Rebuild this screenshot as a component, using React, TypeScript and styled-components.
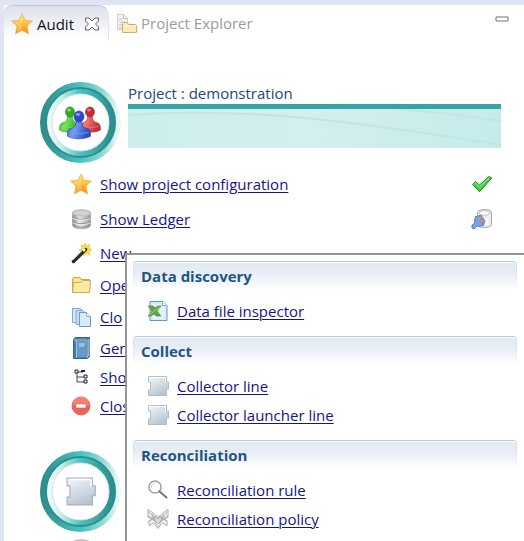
import React from "react";
import styled, { createGlobalStyle } from "styled-components";

const GlobalStyle = createGlobalStyle`
  * { box-sizing: border-box; }
  body { margin: 0; background: #fff; font-family: "Open Sans", "Noto Sans", sans-serif; font-size: 15px; line-height: 20px; }
  svg { display: block; flex: none; }
  button { font: inherit; border: 0; padding: 0; background: none; cursor: pointer; }
  ul { list-style: none; margin: 0; padding: 0; }
`;

const Page = styled.div`
  position: relative;
  height: 100vh;
  overflow: hidden;
  background: #fff;
  border-top: 5px solid #dfe5f5;
  border-left: 4px solid #dfe5f5;
`;
const TabBar = styled.header`
  display: flex;
  align-items: center;
  height: 36px;
  padding-right: 13px;
`;
const Tab = styled.div<{ $active?: boolean }>`
  display: flex;
  align-items: center;
  gap: 9px;
  height: 36px;
  padding: 0 7px;
  border-radius: 8px 10px 0 0;
  ${(p) =>
    p.$active &&
    "background: linear-gradient(#dde0ec, #fff 32px); border-top: 1px solid #c3c9dc; border-right: 1px solid #e2e5ee;"}
`;
const TabLabel = styled.button<{ $active?: boolean }>`
  display: flex;
  align-items: center;
  gap: 4px;
  font-size: 15px;
  color: ${(p) => (p.$active ? "#101020" : "#9b9b9b")};
`;
const IconButton = styled.button`
  display: grid;
  place-items: center;
  width: 18px;
  height: 18px;
`;
const Spacer = styled.div`
  flex: 1;
`;
const MinimizeButton = styled(IconButton)`
  align-self: flex-start;
  margin-top: 5px;
`;
const Main = styled.main`
  padding: 41px 23px 0 36px;
`;
const GroupHeader = styled.section`
  display: flex;
  gap: 7px;
`;
const Intro = styled.div`
  flex: 1;
  min-width: 0;
`;
const Title = styled.h1`
  margin: 0;
  font-size: 15px;
  font-weight: 400;
  line-height: 22px;
  color: #26467c;
`;
const Banner = styled.div`
  height: 44px;
  border-top: 5px solid #36a3a4;
  background: linear-gradient(100deg, #cdeeed, #d3efee 50%, #c5ebea);
`;
const Actions = styled.ul`
  padding: 3px 8px 31px 30px;
`;
const Action = styled.li<{ $height: number }>`
  display: flex;
  align-items: center;
  gap: 8px;
  height: ${(p) => p.$height}px;
`;
const IconCell = styled.span`
  display: grid;
  place-items: center;
  width: 22px;
  height: 22px;
  flex: none;
`;
const Link = styled.a`
  color: #14148c;
  font-size: 15px;
  white-space: nowrap;
  text-decoration: underline;
  text-decoration-thickness: 1px;
  text-underline-offset: 2px;
`;
const Menu = styled.nav`
  position: absolute;
  top: 248px;
  left: 121px;
  right: 0;
  bottom: 0;
  padding: 6px 7px 0 6px;
  background: #fff;
  border-top: 2px solid #969696;
  border-left: 2px solid #969696;
`;
const MenuSection = styled.section`
  margin-bottom: 11px;
`;
const MenuTitle = styled.h2`
  height: 29px;
  margin: 0 0 6px;
  padding: 4px 8px;
  font-size: 15px;
  line-height: 20px;
  color: #205586;
  border-top: 1px solid #b4cbdf;
  border-radius: 4px;
  background:
    linear-gradient(#c3d6e6, #fff) left / 1px 100% no-repeat,
    linear-gradient(#c3d6e6, #fff) right / 1px 100% no-repeat,
    linear-gradient(#e0eaf2, #e9edf5 40%, #fff);
  box-shadow: inset 0 1px #fff;
`;
const MenuItem = styled.li`
  display: flex;
  align-items: center;
  gap: 8px;
  height: 29px;
  padding-left: 14px;
`;

const Star = () => (
  <svg width="22" height="22" viewBox="0 0 22 22">
    <defs>
      <linearGradient id="star" x2="0" y2="1">
        <stop stopColor="#ffe486" />
        <stop offset=".5" stopColor="#ffbd3b" />
        <stop offset="1" stopColor="#f7861d" />
      </linearGradient>
    </defs>
    <path d="M11 .8 14.200 7.200 21.500 8 16 13 17.500 20.800 11 17.300 4.500 20.800 6 13 .5 8 7.800 7.200Z" fill="url(#star)" stroke="#f0ae50" strokeWidth=".7" strokeLinejoin="round" />
    <path d="M11 3v13l-5 3 1.200-6-4-4 5.500-.6Z" fill="#fff4b4" opacity=".3" />
  </svg>
);
const CloseTab = () => (
  <svg width="16" height="16" viewBox="0 0 16 16">
    <path d="M1.500 2H5l3 3 3-3h3.500v3l-3 3 3 3v3H11l-3-3-3 3H1.500v-3l3-3-3-3Z" fill="#fff" stroke="#636363" strokeLinejoin="round" />
  </svg>
);
const Explorer = () => (
  <svg width="21" height="21" viewBox="0 0 21 21">
    <path d="M1.500 1.500h6l4 4v11h-10Z" fill="#f7f6ee" stroke="#d8cfb3" />
    <path d="M7.500 1.500v4h4M3 6h3m-3 3h6m-6 3h4m-4 3h3" fill="none" stroke="#b5c1cf" />
    <path d="M6.500 19.500v-9l1-1h4l1 2h7l1 1v7Z" fill="#ffeabb" stroke="#d6aa6e" />
    <path d="M7.500 13h12" stroke="#fff6dc" />
  </svg>
);
const Minimize = () => (
  <svg width="14" height="6" viewBox="0 0 14 6">
    <path d="M1 1h12v4H1Z" fill="#fff" stroke="#707070" />
  </svg>
);
const Ledger = () => (
  <svg width="21" height="21" viewBox="0 0 21 21">
    <defs>
      <linearGradient id="silver">
        <stop stopColor="#8c8c8c" />
        <stop offset=".4" stopColor="#e8e8e8" />
        <stop offset="1" stopColor="#999" />
      </linearGradient>
    </defs>
    <path d="M1.500 4C1.500 0 19.500 0 19.500 4v12c0 5-18 5-18 0Z" fill="url(#silver)" stroke="#b0b0b0" />
    <ellipse cx="10.500" cy="4" rx="9" ry="3" fill="#d2d2d2" stroke="#bbb" />
    <path d="M1.500 8c2 3 16 3 18 0m-18 4.500c2 3 16 3 18 0M2 16c2 3 15 3 17 0" fill="none" stroke="#868686" />
    <path d="M2 9.200c3 2.500 14 2.500 17 0M2 13.700c3 2.500 14 2.500 17 0" fill="none" stroke="#eee" />
  </svg>
);
const Wand = () => (
  <svg width="21" height="21" viewBox="0 0 21 21">
    <path d="m14 0 1.500 3L19 1l-1 4 3 1.500-3 2 1 4-3.500-2L12 13l-1-4-3-2 3-1-1-4 3 1Z" fill="#ffdc40" stroke="#efc34a" strokeWidth=".7" />
    <path d="M2.500 18.500 14.500 6.500" stroke="#292929" strokeWidth="3.500" strokeLinecap="round" />
    <path d="m2 17 9-9" stroke="#aaa" />
    <path d="m12 8 2-2" stroke="#fff" strokeWidth="2.500" />
  </svg>
);
const Folder = () => (
  <svg width="21" height="18" viewBox="0 0 21 18">
    <path d="M1.500 15.500v-13l1-1H9l1 2h8.500v12Z" fill="#ffe292" stroke="#d5a540" />
    <path d="m1.500 16.500 1-10H10l2-2h7.500l-1 12Z" fill="#ffe9a5" stroke="#d7a845" />
    <path d="M3 8h8l2-2h5" fill="none" stroke="#fff7cf" />
  </svg>
);
const Copy = () => (
  <svg width="21" height="21" viewBox="0 0 21 21">
    <path d="M1.500 1.500h8l3 3v11h-11Z" fill="#d7eafa" stroke="#77a9d4" />
    <path d="M5 3.500h7l3 3v11H5Z" fill="#c5ddf3" stroke="#82add3" />
    <path d="M8.500 5.500h7l4 4v10h-11Z" fill="#d9eafa" stroke="#669bcb" />
    <path d="M15.500 5.500v4h4" fill="#fff" stroke="#82acd2" />
  </svg>
);
const Book = () => (
  <svg width="19" height="22" viewBox="0 0 19 22">
    <path d="M1.500 2.500 3 .5h14.500v19l-2 2h-14Z" fill="#487dab" stroke="#356692" />
    <path d="M2 3h13v18M4.500 3v18" fill="none" stroke="#9cc3e2" />
    <path d="M5 4h10v16H5Z" fill="#6699c3" />
    <path d="M7 7h6m-6 2h5" stroke="#d4e8f7" />
    <path d="M15 20 17 18V2" fill="none" stroke="#c5d6e3" />
  </svg>
);
const Tree = () => (
  <svg width="15" height="16" viewBox="0 0 15 16">
    <path d="M3 3v10h7M3 8h7M4 3h5" fill="none" stroke="#444" />
    <path d="M1 1h3v3H1Zm9 5h3v3h-3Zm0 5h3v3h-3Z" fill="#eee" stroke="#24204d" />
    <path d="M7 2h4" stroke="#24204d" strokeWidth="2" />
  </svg>
);
const Stop = () => (
  <svg width="20" height="20" viewBox="0 0 20 20">
    <circle cx="10" cy="10" r="9" fill="#ed655a" stroke="#d96b63" />
    <path d="M2 9a8 8 0 0 1 16 0c-5 2-10 2-16 0" fill="#ff9a8b" opacity=".55" />
    <path d="M5 8h10v4H5Z" fill="#fff" stroke="#d85650" strokeWidth=".6" />
  </svg>
);
const Check = () => (
  <svg width="22" height="18" viewBox="0 0 22 18">
    <path d="m1.500 9.500 3-3 4 3.500L18 1.500l2.800 1.500L8.500 16.800Z" fill="#42ce42" stroke="#25882c" strokeLinejoin="round" />
    <path d="m3 9.500 1.500-1.500 4 4 9.500-9" fill="none" stroke="#a5f09c" />
  </svg>
);
const Query = () => (
  <svg width="22" height="21" viewBox="0 0 22 21">
    <path d="M6.500 3.500c0-4 14-4 14 0v12c0 4-14 4-14 0Z" fill="#ececec" stroke="#a8a8a8" />
    <ellipse cx="13.500" cy="4" rx="5" ry="2.200" fill="#fff" stroke="#bbb" />
    <path d="M16 9v7" stroke="#fff" strokeWidth="3" />
    <path d="m5 7 8 9c-3 1-5 2-7 1l-3 3-2-1v-3l3-2c-1-3 0-5 1-7Z" fill="#7ba3dd" stroke="#5583c4" />
    <path d="m7 7 3-1 4 6-1 3Z" fill="#999" stroke="#777" strokeDasharray="2 1" />
  </svg>
);
const Sheet = () => (
  <svg width="22" height="22" viewBox="0 0 22 22">
    <path d="M3 1.500h13l4 4V20.500H3Z" fill="#d7eafa" stroke="#5f96cb" />
    <path d="M5 4h9v3h4v12H5Z" fill="#e3f0fb" />
    <path d="M15.500 1.500v4h4" fill="#fff" stroke="#82add4" />
    <path d="M1 6h5l2 2 3-2h3l-4 5 4 5H9l-2-2-3 2H1l4-5Z" fill="#62a442" stroke="#4d8c3b" strokeWidth=".7" />
    <path d="m2 15 11-8" stroke="#a4cd84" />
  </svg>
);
const Puzzle = ({ size = 22 }: { size?: number }) => (
  <svg width={size} height={size} viewBox="0 0 22 22">
    <defs>
      <linearGradient id="puzzle" x2=".5" y2="1">
        <stop stopColor="#f5f8fa" />
        <stop offset="1" stopColor="#b7c6d3" />
      </linearGradient>
    </defs>
    <path d="M1.500 1.500h18v5.500h2v7h-2v6.500h-18v-5.500h2v-8h-2Z" fill="url(#puzzle)" stroke="#a6b1ba" strokeWidth=".8" />
    <path d="M2.500 2.500h16v5" fill="none" stroke="#fff" />
  </svg>
);
const Search = () => (
  <svg width="22" height="22" viewBox="0 0 22 22">
    <circle cx="8" cy="8" r="6" fill="#fff" stroke="#a0a0a0" strokeWidth="1.500" />
    <path d="m12.500 12.500 7 6" stroke="#777" strokeWidth="2" strokeLinecap="round" />
    <path d="M4.500 9A4 4 0 0 1 8 4" fill="none" stroke="#d5d5d5" />
  </svg>
);
const Policy = () => (
  <svg width="22" height="22" viewBox="0 0 23 22">
    <g fill="none" stroke="#a6a6a6" strokeWidth=".9">
      <path d="M1 1l6 4 2.500 3h4L16 5l6-4v8l-4 2 3 2v5l-5-3-4.500 6L7 15l-5 3v-5l3-2-4-2Z" fill="#eee" />
      <path d="m1 3 8 7m13-7-8 7M6 6l-1 5 4 3m8-8 1 5-4 3M2 13l7-3m12 3-7-3M1 8l6 3m15-3-6 3" />
    </g>
    <path d="M7 9h3l1.500 2L13 9h3l-2 5-2.500 2L9 14Z" fill="#ddd" stroke="#888" strokeWidth=".8" />
    <path d="m9 15 2.500 1 2.500-1-2.500 5Z" fill="#fff" stroke="#bbb" strokeWidth=".8" />
  </svg>
);
const Ring = ({ children }: { children: React.ReactNode }) => (
  <svg width="81" height="81" viewBox="0 0 81 81">
    <defs>
      <linearGradient id="outer">
        <stop stopColor="#2e8e8c" />
        <stop offset=".5" stopColor="#46c3c2" />
        <stop offset=".8" stopColor="#94d9d5" />
        <stop offset="1" stopColor="#eaf8f7" />
      </linearGradient>
      <linearGradient id="inner">
        <stop stopColor="#f0fbfa" />
        <stop offset=".2" stopColor="#c4eceb" />
        <stop offset=".5" stopColor="#48c2c0" />
        <stop offset="1" stopColor="#2b8f8e" />
      </linearGradient>
    </defs>
    <circle cx="40.500" cy="40.500" r="37.500" fill="#fff" stroke="url(#outer)" strokeWidth="6" />
    <circle cx="40.500" cy="40.500" r="31.500" fill="none" stroke="url(#inner)" strokeWidth="6" />
    <circle cx="40.500" cy="40.500" r="34.500" fill="none" stroke="#2f8d8c" strokeWidth="2" />
    <circle cx="40.500" cy="40.500" r="28.500" fill="#fff" stroke="#d3e2e1" />
    {children}
  </svg>
);
const Person = ({ x, y, id, light, color, dark, scale = 1 }: { x: number; y: number; id: string; light: string; color: string; dark: string; scale?: number }) => (
  <g transform={`translate(${x} ${y}) scale(${scale})`}>
    <defs>
      <linearGradient id={id} x2="1" y2=".3">
        <stop stopColor={color} />
        <stop offset=".4" stopColor={light} />
        <stop offset="1" stopColor={color} />
      </linearGradient>
    </defs>
    <path d="M-2.500 7C-2 12-3 15-8 16c-2 1-2.500 3-2.500 7 5 3 16 3 21 0 0-4-.5-6-2.500-7C3 15 2 12 2.500 7Z" fill={`url(#${id})`} stroke={dark} strokeWidth=".5" />
    <ellipse cx="0" cy="5" rx="4.500" ry="5" fill={color} stroke={dark} strokeWidth=".6" />
    <ellipse cx="-1" cy="3" rx="2" ry="1.500" fill={light} />
    <path d="M-9 19c5 2 13 2 18 0" fill="none" stroke={light} strokeWidth=".8" />
  </g>
);
const People = () => (
  <>
    <Person x={30} y={25} id="green" light="#75e45b" color="#35a82a" dark="#1e7d1c" />
    <Person x={50} y={25} id="red" light="#f67575" color="#bd3038" dark="#942630" />
    <Person x={39} y={29} id="blue" light="#789ef8" color="#2b4bc0" dark="#1c348f" scale={1.1} />
  </>
);
const BannerLines = () => (
  <svg width="100%" height="39" viewBox="0 0 373 39" preserveAspectRatio="none">
    <path d="M0 6C110-2 215 10 373 36M270 0Q320 4 373 12" fill="none" stroke="#bce7e5" strokeWidth="2" />
  </svg>
);

type Entry = { label: string; icon: React.ReactNode; height: number; status?: React.ReactNode };
const actions: Entry[] = [
  { label: "Show project configuration", icon: <Star />, height: 35, status: <Check /> },
  { label: "Show Ledger", icon: <Ledger />, height: 36, status: <Query /> },
  { label: "New", icon: <Wand />, height: 32 },
  { label: "Open", icon: <Folder />, height: 32 },
  { label: "Clo", icon: <Copy />, height: 32 },
  { label: "Gen", icon: <Book />, height: 29 },
  { label: "Show", icon: <Tree />, height: 29 },
  { label: "Close", icon: <Stop />, height: 29 },
];
const sections = [
  { title: "Data discovery", items: [{ label: "Data file inspector", icon: <Sheet /> }] },
  {
    title: "Collect",
    items: [
      { label: "Collector line", icon: <Puzzle /> },
      { label: "Collector launcher line", icon: <Puzzle /> },
    ],
  },
  {
    title: "Reconciliation",
    items: [
      { label: "Reconciliation rule", icon: <Search /> },
      { label: "Reconciliation policy", icon: <Policy /> },
    ],
  },
];

export default function App() {
  return (
    <Page>
      <GlobalStyle />
      <TabBar>
        <Tab $active>
          <TabLabel $active><Star />Audit</TabLabel>
          <IconButton aria-label="Close Audit"><CloseTab /></IconButton>
        </Tab>
        <Tab>
          <TabLabel><Explorer />Project Explorer</TabLabel>
        </Tab>
        <Spacer />
        <MinimizeButton aria-label="Minimize"><Minimize /></MinimizeButton>
      </TabBar>
      <Main>
        <GroupHeader>
          <Ring><People /></Ring>
          <Intro>
            <Title>Project : demonstration</Title>
            <Banner><BannerLines /></Banner>
          </Intro>
        </GroupHeader>
        <Actions>
          {actions.map((a) => (
            <Action key={a.label} $height={a.height}>
              <IconCell>{a.icon}</IconCell>
              <Link href="#">{a.label}</Link>
              {a.status && <><Spacer />{a.status}</>}
            </Action>
          ))}
        </Actions>
        <GroupHeader>
          <Ring>
            <svg x="25" y="25" width="31" height="31"><Puzzle size={31} /></svg>
          </Ring>
        </GroupHeader>
        <Actions>
          <Action $height={29}><IconCell><Ledger /></IconCell></Action>
        </Actions>
      </Main>
      <Menu aria-label="New">
        {sections.map((s) => (
          <MenuSection key={s.title}>
            <MenuTitle>{s.title}</MenuTitle>
            <ul>
              {s.items.map((i) => (
                <MenuItem key={i.label}>
                  {i.icon}
                  <Link href="#">{i.label}</Link>
                </MenuItem>
              ))}
            </ul>
          </MenuSection>
        ))}
      </Menu>
    </Page>
  );
}
